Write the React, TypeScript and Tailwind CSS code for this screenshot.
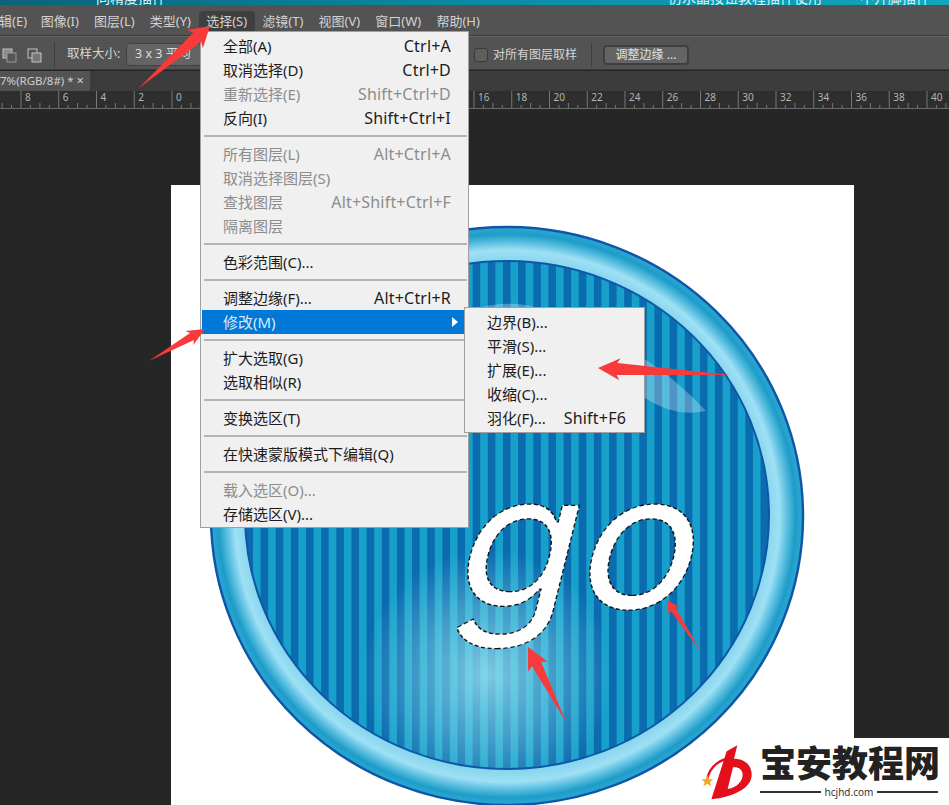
import React from "react";

type Row = { t?: string; s?: string; d?: boolean; sep?: boolean; hi?: boolean };
const rows: Row[] = [
  { t: "全部(A)", s: "Ctrl+A" },
  { t: "取消选择(D)", s: "Ctrl+D" },
  { t: "重新选择(E)", s: "Shift+Ctrl+D", d: true },
  { t: "反向(I)", s: "Shift+Ctrl+I" },
  { sep: true },
  { t: "所有图层(L)", s: "Alt+Ctrl+A", d: true },
  { t: "取消选择图层(S)", d: true },
  { t: "查找图层", s: "Alt+Shift+Ctrl+F", d: true },
  { t: "隔离图层", d: true },
  { sep: true },
  { t: "色彩范围(C)..." },
  { sep: true },
  { t: "调整边缘(F)...", s: "Alt+Ctrl+R" },
  { t: "修改(M)", hi: true },
  { sep: true },
  { t: "扩大选取(G)" },
  { t: "选取相似(R)" },
  { sep: true },
  { t: "变换选区(T)" },
  { sep: true },
  { t: "在快速蒙版模式下编辑(Q)" },
  { sep: true },
  { t: "载入选区(O)...", d: true },
  { t: "存储选区(V)..." },
];

const sub = [
  { t: "边界(B)..." },
  { t: "平滑(S)..." },
  { t: "扩展(E)..." },
  { t: "收缩(C)..." },
  { t: "羽化(F)...", s: "Shift+F6" },
];

const menuItems = [
  { t: "辑(E)", c: "" },
  { t: "图像(I)", c: "" },
  { t: "图层(L)", c: "" },
  { t: "类型(Y)", c: "" },
  { t: "选择(S)", c: "bg-[#3f3f3f] rounded-t-sm" },
  { t: "滤镜(T)", c: "" },
  { t: "视图(V)", c: "" },
  { t: "窗口(W)", c: "" },
  { t: "帮助(H)", c: "" },
];

function arrowPoints(tx: number, ty: number, ex: number, ey: number, len: number, half: number, neck: number) {
  const L = Math.hypot(ex - tx, ey - ty);
  const dx = (ex - tx) / L;
  const dy = (ey - ty) / L;
  const bx = tx + dx * len;
  const by = ty + dy * len;
  const nx = -dy;
  const ny = dx;
  const pts = [
    [tx, ty],
    [bx + nx * half, by + ny * half],
    [bx + dx * -3 + nx * neck, by + dy * -3 + ny * neck],
    [ex, ey],
    [bx + dx * -3 - nx * neck, by + dy * -3 - ny * neck],
    [bx - nx * half, by - ny * half],
  ];
  return pts.map((p) => p.join(",")).join(" ");
}

function Ruler() {
  const ticks: React.ReactNode[] = [];
  for (let k = -5; k <= 21; k++) {
    const x = 172 + 37.75 * k;
    ticks.push(<line key={"a" + k} x1={x} x2={x} y1={0} y2={17} stroke="#8a8a8a" strokeWidth={0.8} />);
    ticks.push(<line key={"b" + k} x1={x + 18.9} x2={x + 18.9} y1={12} y2={17} stroke="#8a8a8a" strokeWidth={0.8} />);
    ticks.push(<line key={"c" + k} x1={x + 9.4} x2={x + 9.4} y1={14} y2={17} stroke="#8a8a8a" strokeWidth={0.8} />);
    ticks.push(<line key={"d" + k} x1={x + 28.3} x2={x + 28.3} y1={14} y2={17} stroke="#8a8a8a" strokeWidth={0.8} />);
    if (x < 195 || x > 465) {
      ticks.push(
        <text key={"t" + k} x={x + 4} y={10} fontSize={10} fill="#b4b4b4" fontFamily="Noto Sans">
          {Math.abs(2 * k)}
        </text>
      );
    }
  }
  return (
    <svg width={949} height={17} className="block">
      {ticks}
    </svg>
  );
}

function Artwork() {
  return (
    <svg viewBox="171 185 683 620" width={683} height={620} className="block">
      <defs>
        <radialGradient id="ring" cx="50%" cy="50%" r="50%">
          <stop offset="0.87" stopColor="#7fd3ec" />
          <stop offset="0.92" stopColor="#9fe0f5" />
          <stop offset="0.95" stopColor="#55bcde" />
          <stop offset="0.975" stopColor="#1e9cc9" />
          <stop offset="0.995" stopColor="#2aa6d0" />
          <stop offset="1" stopColor="#5fc0e0" />
        </radialGradient>
        <pattern id="stripes" x="3" y="0" width="15.15" height="10" patternUnits="userSpaceOnUse">
          <rect width="15.15" height="10" fill="#18a0cc" />
          <rect width="7.6" height="10" fill="#0a6bae" />
        </pattern>
        <radialGradient id="glow" cx="50%" cy="50%" r="50%">
          <stop offset="0" stopColor="#a6e8f2" stopOpacity="0.75" />
          <stop offset="0.55" stopColor="#8adcec" stopOpacity="0.42" />
          <stop offset="1" stopColor="#8adcec" stopOpacity="0" />
        </radialGradient>
        <clipPath id="inner">
          <ellipse cx="507" cy="515" rx="262" ry="254" />
        </clipPath>
      </defs>
      <ellipse cx="507" cy="516" rx="296" ry="289" fill="url(#ring)" stroke="#0f56a8" strokeWidth="2.5" />
      <ellipse cx="507" cy="515" rx="262" ry="254" fill="url(#stripes)" />
      <g clipPath="url(#inner)">
        <ellipse cx="487" cy="675" rx="125" ry="125" fill="url(#glow)" />
        <path d="M465 312 Q520 292 565 320 Q650 350 706 411 Q675 418 645 398 Q590 360 520 340 Q490 330 465 335Z" fill="#fff" opacity="0.28" />
      </g>
      <ellipse cx="507" cy="515" rx="262" ry="254" fill="none" stroke="#0f56a8" strokeWidth="2" />
      <g transform="translate(447 608) skewX(-14) scale(1.06 1)">
        <text
          x="0"
          y="0"
          fontFamily="Inter"
          fontSize="188"
          fontWeight="400"
          fill="#ffffff"
          stroke="#111"
          strokeWidth="1.3"
          strokeDasharray="4 2.5"
        >
          go
        </text>
      </g>
      <polygon points={arrowPoints(528, 647, 566, 722, 22, 11, 5)} fill="#f83a3a" />
      <polygon points={arrowPoints(667, 600, 701, 652, 14, 7, 3)} fill="#f83a3a" />
    </svg>
  );
}

export default function App() {
  return (
    <div className="relative w-[949px] h-[805px] overflow-hidden flex flex-col bg-[#262626] font-['Noto_Sans','Noto_Sans_CJK_SC',sans-serif]">
      {/* wallpaper strip */}
      <div className="h-[5px] shrink-0 overflow-hidden bg-gradient-to-r from-[#0a6379] via-[#0a8ba3] to-[#12a5bd] flex text-[14px] leading-none text-[#dff3f5]">
        <span className="ml-[96px] mt-[-9px] whitespace-nowrap">同精度插件</span>
        <span className="ml-[502px] mt-[-9px] whitespace-nowrap">仿水晶按钮教程插件使用</span>
        <span className="ml-[38px] mt-[-9px] whitespace-nowrap">不开脚插件</span>
      </div>

      {/* menu bar */}
      <div className="h-[31px] shrink-0 bg-[#535353] border-b border-[#3b3b3b] flex items-end pb-[4px] text-[13px] leading-[20px] text-[#d2d2d2]">
        <div className="flex ml-[-1px]">
          {menuItems.map((m, i) => (
            <span key={i} className={"whitespace-nowrap " + (i === 0 ? "pr-[6px] " : "px-[7.6px] ") + m.c}>
              {m.t}
            </span>
          ))}
        </div>
      </div>

      {/* options bar */}
      <div className="h-[34px] shrink-0 bg-[#535353] border-t border-[#656565] border-b border-b-[#3a3a3a] pt-[3px] flex items-center text-[12.5px] text-[#d6d6d6]">
        <svg width={44} height={16} viewBox="0 0 44 16" className="ml-[2px] shrink-0">
          <rect x="1" y="2" width="9" height="9" fill="#8a8a8a" stroke="#c4c4c4" />
          <rect x="5" y="6" width="9" height="9" fill="#555" stroke="#9a9a9a" />
          <rect x="26" y="2" width="9" height="9" fill="none" stroke="#c4c4c4" />
          <rect x="30" y="6" width="9" height="9" fill="#777" stroke="#c4c4c4" />
        </svg>
        <div className="w-px h-[26px] bg-[#3d3d3d] ml-[8px]" />
        <span className="ml-[12px] w-[51px] whitespace-nowrap">取样大小:</span>
        <div className="ml-[8px] w-[76px] h-[23px] rounded-sm bg-[#646464] border border-[#414141] flex items-center pl-2 text-[#dcdcdc] whitespace-nowrap overflow-hidden">
          3 x 3 平均
        </div>
        <div className="ml-[272px] w-[14px] h-[14px] rounded-[3px] bg-[#5e5e5e] border border-[#3a3a3a]" />
        <span className="ml-[5px] w-[84px] text-[12px] whitespace-nowrap">对所有图层取样</span>
        <div className="w-px h-[24px] bg-[#3d3d3d] ml-[14px]" />
        <div className="ml-[11px] w-[86px] h-[20px] rounded-sm bg-[#646464] border-2 border-[#3f3f3f] flex items-center justify-center whitespace-nowrap text-[12px] text-[#e2e2e2]">
          调整边缘 ...
        </div>
      </div>

      {/* tab bar */}
      <div className="h-[20px] shrink-0 mt-px bg-[#3c3c3c] flex text-[11.5px] text-[#cfcfcf]">
        <div className="w-[90px] bg-[#535353] flex items-center justify-between pr-[6px] whitespace-nowrap">
          <span>7%(RGB/8#) *</span>
          <span className="text-[13px]">×</span>
        </div>
      </div>

      {/* ruler */}
      <div className="h-[18px] shrink-0 bg-[#2e2e2e] border-b border-[#6a6a6a]">
        <Ruler />
      </div>

      {/* canvas */}
      <div className="flex-1 overflow-hidden pl-[171px] pt-[76px]">
        <div className="w-[683px] h-[620px] bg-white">
          <Artwork />
        </div>
      </div>

      {/* Select menu */}
      <div className="absolute left-[200px] top-[31px] w-[269px] h-[497px] bg-[#f0f0f0] border border-[#a0a0a0] pt-[2px] pl-px text-[15px] leading-[24px] text-[#1c1c1c]">
        {rows.map((r, i) =>
          r.sep ? (
            <div key={i} className="h-3 flex items-center pl-[2px] pr-px">
              <div className="h-[2px] w-full bg-[#b4b4b4]" />
            </div>
          ) : (
            <div
              key={i}
              className={
                "h-6 pb-px flex items-center justify-between pl-[21px] pr-[17px] whitespace-nowrap " +
                (r.hi ? "bg-[#0078d7] text-[#d9ebfa] relative " : "") +
                (r.d ? "text-[#8c8c8c]" : "")
              }
            >
              <span>{r.t}</span>
              {r.s && <span className="text-[16px] tracking-[0.2px]">{r.s}</span>}
              {r.hi && (
                <svg width={6} height={10} viewBox="0 0 6 10" className="absolute right-[10px] top-[7px]">
                  <polygon points="0,0 6,5 0,10" fill="#fff" />
                </svg>
              )}
            </div>
          )
        )}
      </div>

      {/* Modify submenu */}
      <div className="absolute left-[464px] top-[307px] w-[181px] h-[126px] bg-[#f0f0f0] border border-[#a0a0a0] pt-[2px] pl-[22px] pr-[18px] text-[15px] leading-[24px] text-[#1c1c1c]">
        {sub.map((s, i) => (
          <div key={i} className="h-6 pb-px flex items-center justify-between whitespace-nowrap">
            <span>{s.t}</span>
            {s.s && <span className="text-[16px] tracking-[0.2px]">{s.s}</span>}
          </div>
        ))}
      </div>

      {/* annotation arrows above the menus */}
      <svg width={949} height={805} viewBox="0 0 949 805" className="absolute inset-0 pointer-events-none">
        <polygon points={arrowPoints(210, 26, 139, 88, 20, 12, 6)} fill="#f83a3a" />
        <polygon points={arrowPoints(205, 329, 149, 361, 18, 8, 4)} fill="#f83a3a" />
        <polygon points={arrowPoints(598, 368, 730, 375, 22, 11, 6)} fill="#f83a3a" />
      </svg>

      {/* watermark */}
      <div className="absolute left-[712px] top-[738px] w-[237px] h-[67px] bg-white flex">
        <svg width={48} height={60} viewBox="0 0 144 180" className="ml-[-8px] mt-[6px] shrink-0 overflow-visible">
          <path d="M10 104 C18 66 50 42 90 42" fill="none" stroke="#e3101c" strokeWidth="7" />
          <path d="M68 22 L100 4 L90 44 C125 44 143 66 143 92 C143 132 90 158 22 166Z M87 70 L71 135 C100 130 116 110 116 92 C116 76 102 68 87 70Z" fill="#e3101c" fillRule="evenodd" />
          <polygon points="10,94 15,106 28,106 18,114 22,127 10,119 -2,127 2,114 -8,106 5,106" fill="#f6a81c" />
        </svg>
        <div className="ml-[8px] flex flex-col w-[178px]">
          <div className="h-[46px] text-[36px] leading-[46px] font-black text-[#222] whitespace-nowrap font-['Noto_Sans_CJK_SC',sans-serif]">
            宝安教程网
          </div>
          <div className="flex items-center mt-[1px]">
            <div className="flex-1 h-[2px] bg-[#333]" />
            <span className="px-[4px] text-[10px] leading-[14px] text-[#333]">hcjhd.com</span>
            <div className="flex-1 h-[2px] bg-[#333]" />
          </div>
        </div>
      </div>
    </div>
  );
}
